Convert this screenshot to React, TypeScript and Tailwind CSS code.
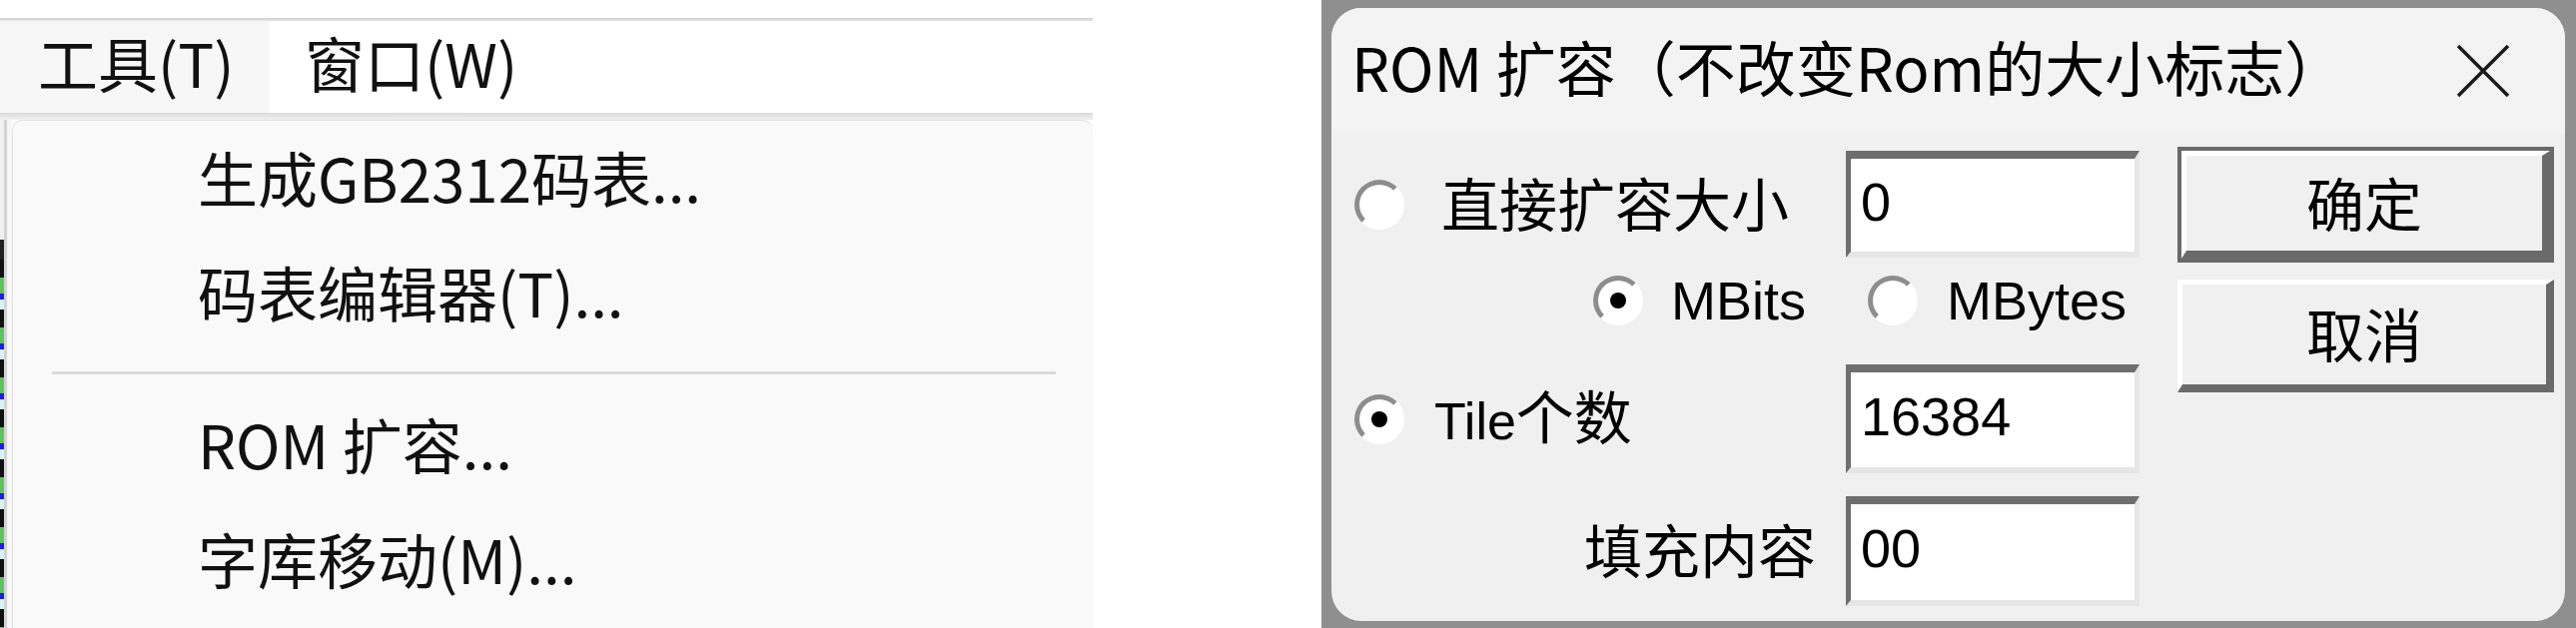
function Radio({ checked = false }: { checked?: boolean }) {
  return (
    <span className="flex h-[50px] w-[50px] shrink-0 items-center justify-center rounded-full border-[5px] border-t-[#8d8d8d] border-l-[#8d8d8d] border-r-white border-b-white bg-white">
      {checked && <span className="h-[16px] w-[16px] rounded-full bg-black" />}
    </span>
  );
}

function Field({ value, className }: { value: string; className: string }) {
  return (
    <div
      className={`flex w-[294px] shrink-0 items-center border-t-[8px] border-l-[5px] border-r-[5px] border-b-[6px] border-t-[#6e6e6e] border-l-[#6e6e6e] border-r-[#e6e6e6] border-b-[#e6e6e6] bg-white pb-[8px] pl-[10px] font-['Liberation_Sans',sans-serif] text-[54px] leading-none text-black ${className}`}
    >
      {value}
    </div>
  );
}

function DialogButton({ label, isDefault = false, className }: { label: string; isDefault?: boolean; className: string }) {
  const face = (
    <div className="flex h-full w-full items-center justify-center border-t-[5px] border-l-[5px] border-r-[8px] border-b-[8px] border-t-white border-l-white border-r-[#6a6a6a] border-b-[#6a6a6a] bg-[#f0f0f0] pb-[4px]">
      {label}
    </div>
  );
  return isDefault ? (
    <div className={`border-[4px] border-[#696969] ${className}`}>{face}</div>
  ) : (
    <div className={className}>{face}</div>
  );
}

function ToolsMenu() {
  const items = ['生成GB2312码表...', '码表编辑器(T)...'];
  const itemsBelow = ['ROM 扩容...', '字库移动(M)...'];

  return (
    <div className="flex w-[1094px] shrink-0 flex-col font-['Noto_Sans_CJK_SC',sans-serif] text-[60px] leading-none text-[#111]">
      <div className="h-[18px] shrink-0" />
      <div className="h-[3px] shrink-0 bg-gradient-to-b from-[#cfcfcf] to-[#e6e6e6]" />
      <div className="flex h-[92px] shrink-0">
        <div className="flex w-[270px] items-center bg-[#f7f7f7] pb-[10px] pl-[38px]">工具(T)</div>
        <div className="flex items-center pb-[10px] pl-[35px]">窗口(W)</div>
      </div>
      <div className="h-[7px] shrink-0 bg-gradient-to-b from-[#dadada] to-[#f1f1f1]" />

      <div className="flex flex-1">
        {/* edge of the window behind the menu */}
        <div className="flex w-[12px] shrink-0 bg-[#f6f6f6]">
          <div className="flex w-[4px] flex-col">
            <div className="h-[120px] bg-[#f1f1f1]" />
            <div className="h-[20px] bg-[#222]" />
            <div className="flex-1 bg-[repeating-linear-gradient(180deg,#111_0px,#111_18px,#5cc45c_18px,#5cc45c_34px,#1c1cf0_34px,#1c1cf0_40px,#d6f3f6_40px,#d6f3f6_50px)]" />
          </div>
          <div className="w-[3px] bg-[#d3d3d3]" />
        </div>

        <div className="flex-1 rounded-t-[10px] border-l border-t border-[#e2e2e2] bg-[#f9f9f9]">
          {items.map((item) => (
            <div key={item} className="flex h-[115px] items-center pb-[4px] pl-[185px]">
              {item}
            </div>
          ))}
          <div className="h-[35px] pt-[21px]">
            <div className="ml-[39px] mr-[37px] h-[3px] bg-[#dadada]" />
          </div>
          {itemsBelow.map((item) => (
            <div key={item} className="flex h-[115px] items-center pl-[185px]">
              {item}
            </div>
          ))}
        </div>
      </div>
    </div>
  );
}

function ExpandDialog() {
  return (
    <div className="flex h-[629px] w-[1256px] shrink-0 bg-[#8f8f8f] pt-[8px] pl-[10px] pr-[11px] pb-[7px]">
      <div className="flex flex-1 flex-col overflow-hidden rounded-[30px] bg-[#f0f0f0] font-['Noto_Sans_CJK_SC',sans-serif] text-black">
        <div className="flex h-[125px] shrink-0 items-center justify-between bg-[#f3f3f3] pl-[20px] pr-[55px] text-[60px] leading-none">
          <span className="pb-[10px]">ROM 扩容（不改变Rom的大小标志）</span>
          <svg width="54" height="54" viewBox="0 0 54 54" className="shrink-0">
            <path d="M2 2 L52 52 M52 2 L2 52" stroke="#1a1a1a" strokeWidth="3.5" fill="none" />
          </svg>
        </div>

        <div className="flex flex-1 text-[58px] leading-none">
          <div className="flex w-[809px] shrink-0 flex-col">
            <div className="mt-[18px] flex h-[107px]">
              <div className="flex w-[515px] items-center pl-[23px]">
                <Radio />
                <span className="ml-[37px] pb-[6px]">直接扩容大小</span>
              </div>
              <Field value="0" className="h-[107px]" />
            </div>

            <div className="flex h-[86px] items-center pl-[262px] font-['Liberation_Sans',sans-serif] text-[54px]">
              <Radio checked />
              <span className="ml-[28px] w-[197px]">MBits</span>
              <Radio />
              <span className="ml-[29px]">MBytes</span>
            </div>

            <div className="mt-[21px] flex h-[109px]">
              <div className="flex w-[515px] items-center pl-[23px]">
                <Radio checked />
                <span className="ml-[30px] pb-[6px]">
                  <span className="font-['Liberation_Sans',sans-serif] text-[52px]">Tile</span>个数
                </span>
              </div>
              <Field value="16384" className="h-[109px]" />
            </div>

            <div className="mt-[23px] flex h-[110px]">
              <div className="flex w-[515px] items-center justify-end pb-[6px] pr-[30px]">填充内容</div>
              <Field value="00" className="h-[110px]" />
            </div>
          </div>

          <div className="ml-[38px] flex w-[377px] shrink-0 flex-col">
            <DialogButton label="确定" isDefault className="mt-[14px] h-[116px]" />
            <DialogButton label="取消" className="mt-[17px] h-[113px]" />
          </div>
        </div>
      </div>
    </div>
  );
}

export default function App() {
  return (
    <div className="flex h-[629px] w-[2579px] overflow-hidden bg-white">
      <ToolsMenu />
      <div className="w-[229px] shrink-0" />
      <ExpandDialog />
    </div>
  );
}
